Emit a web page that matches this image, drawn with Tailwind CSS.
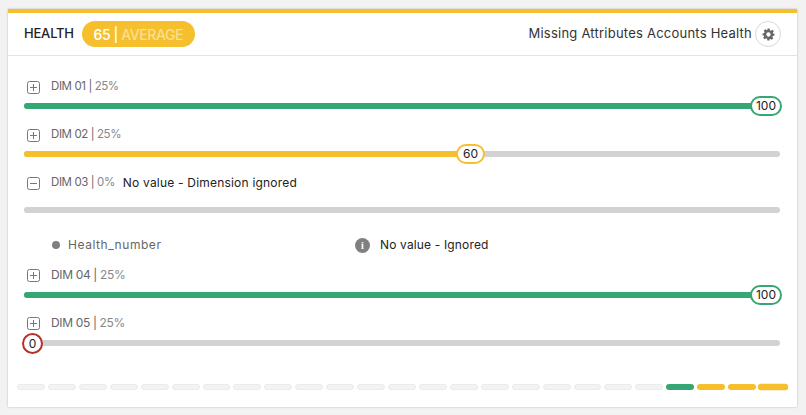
<!DOCTYPE html>
<html lang="en">
  <head>
    <meta charset="UTF-8" />
    <title>Health</title>
    <script src="https://cdn.jsdelivr.net/npm/@tailwindcss/browser@4"></script>
  </head>
  <body class="bg-[#f2f2f2] font-['Inter',sans-serif] w-[806px] h-[415px] overflow-hidden">
    <div class="pt-[9px] pl-[8px] w-[797px]">
      <div class="w-[789px] h-[398px] bg-white border-t-4 border-[#f5bf2e] shadow-[0_0_2px_rgba(0,0,0,0.25)]">
        <!-- header -->
        <div class="h-[43px] flex items-center pl-[16px] pr-[16px] border-b border-[#e3e3e3]">
          <span class="text-[13px] font-medium text-[#222] tracking-[-0.2px]">HEALTH</span>
          <span class="ml-[8px] h-[26px] w-[113px] rounded-full bg-[#f5bf2e] flex items-center justify-center text-[14px] font-medium text-white tracking-[-0.4px]">65 |&nbsp;<span class="text-[#fbe08f]">AVERAGE</span></span>
          <span class="ml-auto text-[13px] text-[#333] tracking-[0.23px]">Missing Attributes Accounts Health</span>
          <span class="ml-[3px] w-[26px] h-[26px] rounded-full border border-[#d9d9d9] flex items-center justify-center">
            <svg width="13" height="13" viewBox="0 0 24 24" fill="#666"><path fill-rule="evenodd" d="M10 1h4l.6 3.1 1.9.8 2.6-1.8 2.8 2.8-1.8 2.6.8 1.9L23 10v4l-3.1.6-.8 1.9 1.8 2.6-2.8 2.8-2.6-1.8-1.9.8L14 23h-4l-.6-3.1-1.9-.8-2.6 1.8-2.8-2.8 1.8-2.6-.8-1.9L1 14v-4l3.1-.6.8-1.9-1.8-2.6 2.8-2.8 2.6 1.8 1.9-.8zM12 8a4 4 0 1 0 0 8 4 4 0 0 0 0-8z"/></svg>
          </span>
        </div>

        <!-- dimensions -->
        <div class="pt-[21px] pl-[16px] w-[772px]">
          <!-- DIM 01 -->
          <div class="h-[48px]">
            <div class="h-[18px] pt-[2px] flex items-center text-[11.5px] text-[#666] tracking-[-0.4px]">
              <svg class="ml-[3px] mr-[11px]" width="13" height="13" viewBox="0 0 13 13" fill="none" stroke="#777"><rect x=".5" y=".5" width="12" height="12" rx="2"/><path d="M3 6.5h7M6.5 3v7"/></svg>
              <span>DIM 01 | <span class="text-[#888]">25%</span></span>
            </div>
            <div class="relative mt-[8px] h-[6px] rounded-full bg-[#d2d2d2]">
              <div class="h-full w-full rounded-full bg-[#36a674]"></div>
              <span class="absolute right-[-2px] top-[-7px] w-[32px] h-[20px] bg-white rounded-full border-2 border-[#36a674] flex items-center justify-center text-[12px] text-[#222]">100</span>
            </div>
          </div>
          <!-- DIM 02 -->
          <div class="h-[48px]">
            <div class="h-[18px] pt-[2px] flex items-center text-[11.5px] text-[#666] tracking-[-0.4px]">
              <svg class="ml-[3px] mr-[11px]" width="13" height="13" viewBox="0 0 13 13" fill="none" stroke="#777"><rect x=".5" y=".5" width="12" height="12" rx="2"/><path d="M3 6.5h7M6.5 3v7"/></svg>
              <span>DIM 02 | <span class="text-[#888]">25%</span></span>
            </div>
            <div class="relative mt-[8px] h-[6px] rounded-full bg-[#d2d2d2]">
              <div class="h-full w-[60%] rounded-full bg-[#f5bf2e]"></div>
              <span class="absolute left-[432px] top-[-7px] w-[29px] h-[20px] bg-white rounded-full border-2 border-[#f5bf2e] flex items-center justify-center text-[12px] text-[#222]">60</span>
            </div>
          </div>
          <!-- DIM 03 -->
          <div class="h-[34px]">
            <div class="h-[18px] pt-[2px] flex items-center text-[11.5px] text-[#666] tracking-[-0.4px]">
              <svg class="ml-[3px] mr-[11px]" width="13" height="13" viewBox="0 0 13 13" fill="none" stroke="#777"><rect x=".5" y=".5" width="12" height="12" rx="2"/><path d="M3 6.5h7"/></svg>
              <span>DIM 03 | <span class="text-[#888]">0%</span></span>
              <span class="ml-[8px] text-[12px] text-[#222] tracking-[0.2px]">No value - Dimension ignored</span>
            </div>
          </div>
          <div class="h-[6px] rounded-full bg-[#d2d2d2]"></div>

          <!-- legend -->
          <div class="h-[52px] flex items-center pl-[28px] pt-[12px] text-[12px]">
            <span class="w-[8px] h-[8px] rounded-full bg-[#808080]"></span>
            <span class="ml-[8px] w-[287px] text-[#666] tracking-[0.55px]">Health_number</span>
            <span class="w-[15px] h-[15px] rounded-full bg-[#808080] text-white flex items-center justify-center text-[10px] font-bold font-['Liberation_Serif',serif]">i</span>
            <span class="ml-[10px] text-[#222] tracking-[0.15px]">No value - Ignored</span>
          </div>

          <!-- DIM 04 -->
          <div class="h-[48px] mt-[1px]">
            <div class="h-[18px] flex items-center text-[12px] text-[#666] tracking-[-0.35px]">
              <svg class="ml-[3px] mr-[11px]" width="13" height="13" viewBox="0 0 13 13" fill="none" stroke="#777"><rect x=".5" y=".5" width="12" height="12" rx="2"/><path d="M3 6.5h7M6.5 3v7"/></svg>
              <span>DIM 04 | <span class="text-[#888]">25%</span></span>
            </div>
            <div class="relative mt-[8px] h-[6px] rounded-full bg-[#d2d2d2]">
              <div class="h-full w-full rounded-full bg-[#36a674]"></div>
              <span class="absolute right-[-2px] top-[-7px] w-[32px] h-[20px] bg-white rounded-full border-2 border-[#36a674] flex items-center justify-center text-[12px] text-[#222]">100</span>
            </div>
          </div>
          <!-- DIM 05 -->
          <div class="h-[48px]">
            <div class="h-[18px] flex items-center text-[12px] text-[#666] tracking-[-0.35px]">
              <svg class="ml-[3px] mr-[11px]" width="13" height="13" viewBox="0 0 13 13" fill="none" stroke="#777"><rect x=".5" y=".5" width="12" height="12" rx="2"/><path d="M3 6.5h7M6.5 3v7"/></svg>
              <span>DIM 05 | <span class="text-[#888]">25%</span></span>
            </div>
            <div class="relative mt-[8px] h-[6px] rounded-full bg-[#d2d2d2]">
              <span class="absolute left-[-2px] top-[-7px] w-[21px] h-[21px] bg-white rounded-full border-2 border-[#b9302a] flex items-center justify-center text-[12px] text-[#222]">0</span>
            </div>
          </div>
        </div>

        <!-- history strip -->
        <div class="mt-[22px] ml-[9px] w-[770px] grid grid-cols-25 gap-[3px]">
          <span class="h-[6px] rounded-full bg-[#f3f3f3] border border-[#ebebeb]"></span>
          <span class="h-[6px] rounded-full bg-[#f3f3f3] border border-[#ebebeb]"></span>
          <span class="h-[6px] rounded-full bg-[#f3f3f3] border border-[#ebebeb]"></span>
          <span class="h-[6px] rounded-full bg-[#f3f3f3] border border-[#ebebeb]"></span>
          <span class="h-[6px] rounded-full bg-[#f3f3f3] border border-[#ebebeb]"></span>
          <span class="h-[6px] rounded-full bg-[#f3f3f3] border border-[#ebebeb]"></span>
          <span class="h-[6px] rounded-full bg-[#f3f3f3] border border-[#ebebeb]"></span>
          <span class="h-[6px] rounded-full bg-[#f3f3f3] border border-[#ebebeb]"></span>
          <span class="h-[6px] rounded-full bg-[#f3f3f3] border border-[#ebebeb]"></span>
          <span class="h-[6px] rounded-full bg-[#f3f3f3] border border-[#ebebeb]"></span>
          <span class="h-[6px] rounded-full bg-[#f3f3f3] border border-[#ebebeb]"></span>
          <span class="h-[6px] rounded-full bg-[#f3f3f3] border border-[#ebebeb]"></span>
          <span class="h-[6px] rounded-full bg-[#f3f3f3] border border-[#ebebeb]"></span>
          <span class="h-[6px] rounded-full bg-[#f3f3f3] border border-[#ebebeb]"></span>
          <span class="h-[6px] rounded-full bg-[#f3f3f3] border border-[#ebebeb]"></span>
          <span class="h-[6px] rounded-full bg-[#f3f3f3] border border-[#ebebeb]"></span>
          <span class="h-[6px] rounded-full bg-[#f3f3f3] border border-[#ebebeb]"></span>
          <span class="h-[6px] rounded-full bg-[#f3f3f3] border border-[#ebebeb]"></span>
          <span class="h-[6px] rounded-full bg-[#f3f3f3] border border-[#ebebeb]"></span>
          <span class="h-[6px] rounded-full bg-[#f3f3f3] border border-[#ebebeb]"></span>
          <span class="h-[6px] rounded-full bg-[#f3f3f3] border border-[#ebebeb]"></span>
          <span class="h-[6px] rounded-full bg-[#36a674]"></span>
          <span class="h-[6px] rounded-full bg-[#f5bf2e]"></span>
          <span class="h-[6px] rounded-full bg-[#f5bf2e]"></span>
          <span class="h-[6px] rounded-full bg-[#f5bf2e] scale-[1.08]"></span>
        </div>
      </div>
    </div>
  </body>
</html>
